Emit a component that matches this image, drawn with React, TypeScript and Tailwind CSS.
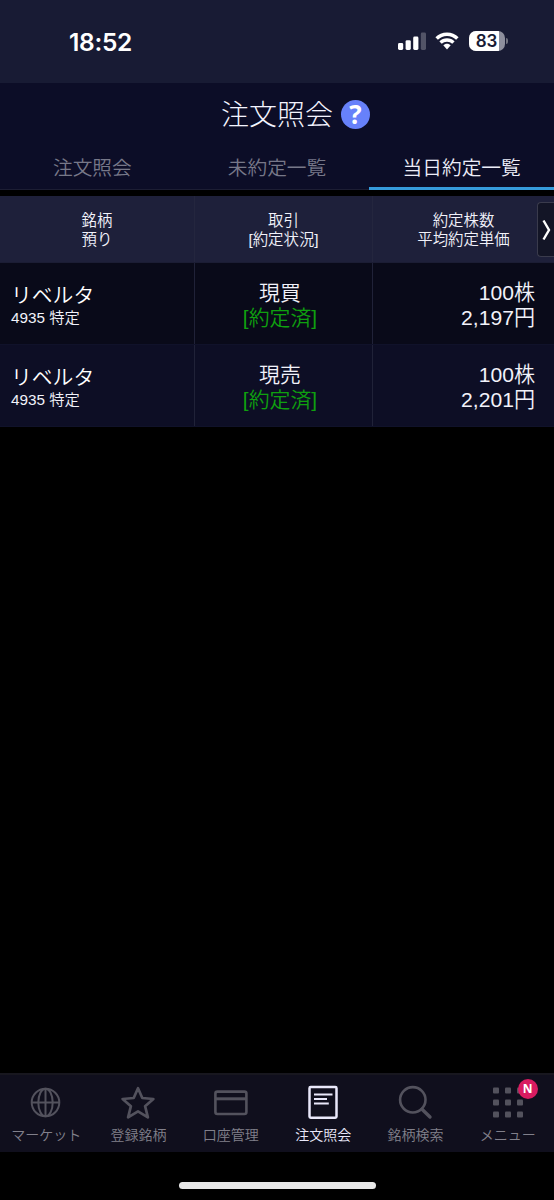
import { useState } from 'react'
import type { ReactNode } from 'react'
import clsx from 'clsx'

interface Execution {
  id: number
  name: string
  code: string
  account: string
  trade: string
  status: string
  shares: string
  price: string
}

const TABS = ['注文照会', '未約定一覧', '当日約定一覧']

const EXECUTIONS: Execution[] = [
  { id: 1, name: 'リベルタ', code: '4935', account: '特定', trade: '現買', status: '約定済', shares: '100', price: '2,197' },
  { id: 2, name: 'リベルタ', code: '4935', account: '特定', trade: '現売', status: '約定済', shares: '100', price: '2,201' }
]

const NAV_ITEMS: { label: string; icon: ReactNode }[] = [
  {
    label: 'マーケット',
    icon: (
      <g strokeWidth="2">
        <circle cx="17.5" cy="18.5" r="13.8" />
        <ellipse cx="17.5" cy="18.5" rx="7.2" ry="13.8" />
        <path d="M17.5 4.5v28M3.500 18.5h28" />
      </g>
    )
  },
  {
    label: '登録銘柄',
    icon: (
      <path
        strokeWidth="2.7"
        strokeLinejoin="round"
        d="M18 4.200l4.300 9.800 11.100 1-8.300 7.200 2.800 11.200L18 27.300l-9.900 6.100 2.800-11.200-8.300-7.200 11.100-1z"
      />
    )
  },
  {
    label: '口座管理',
    icon: (
      <g strokeWidth="2.6">
        <rect x="2.4" y="7.6" width="31" height="22.4" rx="2" />
        <path strokeWidth="3" d="M2.500 14.800h31" />
      </g>
    )
  },
  {
    label: '注文照会',
    icon: (
      <g strokeWidth="2.5">
        <rect x="4.500" y="3" width="27" height="30.800" rx="1.2" />
        <path strokeWidth="1.8" d="M9 10.500h18.500M9 15H22M9 19.500h14.800" />
      </g>
    )
  },
  {
    label: '銘柄検索',
    icon: (
      <g strokeWidth="2.6">
        <circle cx="15.8" cy="15.8" r="12.7" />
        <path strokeWidth="3.4" strokeLinecap="round" d="M25 25.200l8 7.800" />
      </g>
    )
  },
  {
    label: 'メニュー',
    icon: (
      <g fill="currentColor" stroke="none">
        {[3.5, 15.5, 27.5].map(y => [3, 15, 27].map(x => <rect key={`${x}-${y}`} x={x} y={y} width="6" height="6" rx="1" />))}
      </g>
    )
  }
]

function StatusBar() {
  return (
    <div className="h-[83px] shrink-0 bg-[#181b34] flex justify-between pl-[69px] pr-[46px] text-white">
      <span className="mt-[26px] h-8 leading-8 text-[24.5px] font-semibold font-[Inter,sans-serif] tracking-[-0.3px]">18:52</span>
      <div className="flex items-center h-5 mt-[31px]">
        <svg width="28" height="18" viewBox="0 0 28 18" fill="currentColor">
          <rect x="0" y="11" width="5.2" height="7" rx="1.4" />
          <rect x="7.6" y="8.2" width="5.2" height="9.8" rx="1.4" />
          <rect x="15.2" y="4.6" width="5.2" height="13.4" rx="1.4" />
          <rect x="22.8" y="0.6" width="5.2" height="17.4" rx="1.4" opacity="0.25" />
        </svg>
        <svg className="ml-[9px]" width="24" height="18" viewBox="0 0 24 18" fill="currentColor">
          <path d="M12 0.5C7.5 0.5 3.3 2.3.4 5.3l2.5 2.5C5.300 5.400 8.500 4 12 4s6.700 1.400 9.100 3.800l2.500-2.500C20.700 2.300 16.500.5 12 .5z" />
          <path d="M12 6.300c-3 0-5.700 1.200-7.600 3.100L6.800 11.800C8.100 10.500 10 9.700 12 9.700s3.900.8 5.200 2.100l2.400-2.400C17.700 7.500 15 6.300 12 6.300z" />
          <path d="M12 11.800c-1.500 0-2.800.6-3.700 1.500L12 17.500l3.700-4.200c-.9-.9-2.200-1.500-3.700-1.500z" />
        </svg>
        <div className="ml-[10px] w-[36px] h-5 rounded-[7px] overflow-hidden bg-[#8d8f9d] flex">
          <div className="w-[30px] bg-white text-[#181b34] text-[17px] leading-[21px] font-semibold font-[Inter,sans-serif] text-center pl-[5px]">83</div>
        </div>
        <div className="ml-[1px] w-[2px] h-[6px] rounded-r-full bg-[#70727f]" />
      </div>
    </div>
  )
}

export default function App() {
  const [activeTab, setActiveTab] = useState(2)
  const [activeNav, setActiveNav] = useState(3)

  return (
    <div className="w-[554px] h-[1200px] flex flex-col bg-black overflow-hidden font-[350] text-[#f2f2fa] font-['Liberation_Sans','Noto_Sans_CJK_JP',sans-serif]">
      <StatusBar />

      {/* HEADER */}
      <header className="h-[107px] shrink-0 bg-[#0c0d27] flex flex-col">
        <div className="h-[62px] flex items-center justify-center gap-[8px] pl-[37px]">
          <h1 className="mt-[4px] text-[28px] leading-8 w-[112px] font-light whitespace-nowrap text-[#f4f4ff]">注文照会</h1>
          <button className="w-[29px] h-[29px] rounded-full bg-[#6781fa] text-white text-[26px] leading-[28px] font-bold font-[Open_Sans,sans-serif]">?</button>
        </div>
        <div className="h-[45px] grid grid-cols-3 border-b border-[#1c1d33]">
          {TABS.map((tab, i) => (
            <button
              key={tab}
              onClick={() => setActiveTab(i)}
              className={clsx(
                'h-[45px] pt-[4px] text-[19.7px] leading-[38px] whitespace-nowrap border-b-[3px]',
                activeTab === i ? 'text-[#ededf8] border-[#369bdc]' : 'text-[#777889] border-transparent'
              )}
            >
              {tab}
            </button>
          ))}
        </div>
      </header>

      {/* EXECUTIONS */}
      <main className="flex-1 pt-[6px]">
        <div className="relative h-[67px] grid grid-cols-[195px_178px_181px] bg-[#1e203a] text-[15.4px] leading-[19px] text-center border-b border-[#1b1d34]">
          <div className="flex items-center justify-center pt-[2px] border-r border-[#24263e] text-left">銘柄<br />預り</div>
          <div className="flex items-center justify-center pt-[2px] border-r border-[#24263e]">取引<br />[約定状況]</div>
          <div className="flex items-center justify-center pt-[2px]">約定株数<br />平均約定単価</div>
          <button className="absolute right-0 top-[6px] w-[17px] h-[55px] flex items-center justify-center bg-[#131526] rounded-l-[4px] border border-r-0 border-[#3a3b4c]">
            <svg width="9" height="22" viewBox="0 0 9 22" fill="none" stroke="white" strokeWidth="2.4">
              <path d="M1.500 1.500L7 11 1.500 20.500" />
            </svg>
          </button>
        </div>

        {EXECUTIONS.map(item => (
          <div
            key={item.id}
            className="h-[82px] grid grid-cols-[195px_178px_181px] text-[20.9px] leading-[25px] odd:bg-[#0d0e25] even:bg-[#090a19] border-b border-[#10122a]"
          >
            <div className="flex flex-col justify-center pt-[4px] pl-[11px] border-r border-[#202238]">
              <p className="text-[20.8px] leading-6 text-white">{item.name}</p>
              <p className="text-[15.3px] leading-5">{item.code} {item.account}</p>
            </div>
            <div className="flex flex-col justify-center items-center pt-[2px] pr-[7px] border-r border-[#202238]">
              <p>{item.trade}</p>
              <p className="text-[#0fa00f]">[{item.status}]</p>
            </div>
            <div className="flex flex-col justify-center items-end pt-[2px] pr-[19px] text-[21.1px]">
              <p>{item.shares}株</p>
              <p>{item.price}円</p>
            </div>
          </div>
        ))}
      </main>

      {/* BOTTOM NAV */}
      <nav className="h-[79px] shrink-0 bg-[#100f1d] border-t-2 border-[#18171f] grid grid-cols-6">
        {NAV_ITEMS.map((item, i) => (
          <button
            key={item.label}
            onClick={() => setActiveNav(i)}
            className={clsx('relative flex flex-col items-center pt-[9px]', activeNav === i ? 'text-[#e9e8fa]' : 'text-[#53525d]')}
          >
            <svg width="36" height="36" viewBox="0 0 36 36" fill="none" stroke="currentColor">
              {item.icon}
            </svg>
            <span className={clsx('mt-[5px] text-[14px] leading-5 whitespace-nowrap', activeNav !== i && 'text-[#81808b]')}>
              {item.label}
            </span>
            {i === 5 && (
              <span className="absolute left-[56px] top-[4px] w-5 h-5 rounded-full bg-[#d81b60] text-white text-[12px] leading-5 font-bold font-[Open_Sans,sans-serif]">
                N
              </span>
            )}
          </button>
        ))}
      </nav>

      {/* HOME INDICATOR */}
      <div className="h-12 shrink-0 flex justify-center pt-[30px]">
        <div className="w-[197px] h-[7px] rounded-full bg-[#e8e8e8]" />
      </div>
    </div>
  )
}
